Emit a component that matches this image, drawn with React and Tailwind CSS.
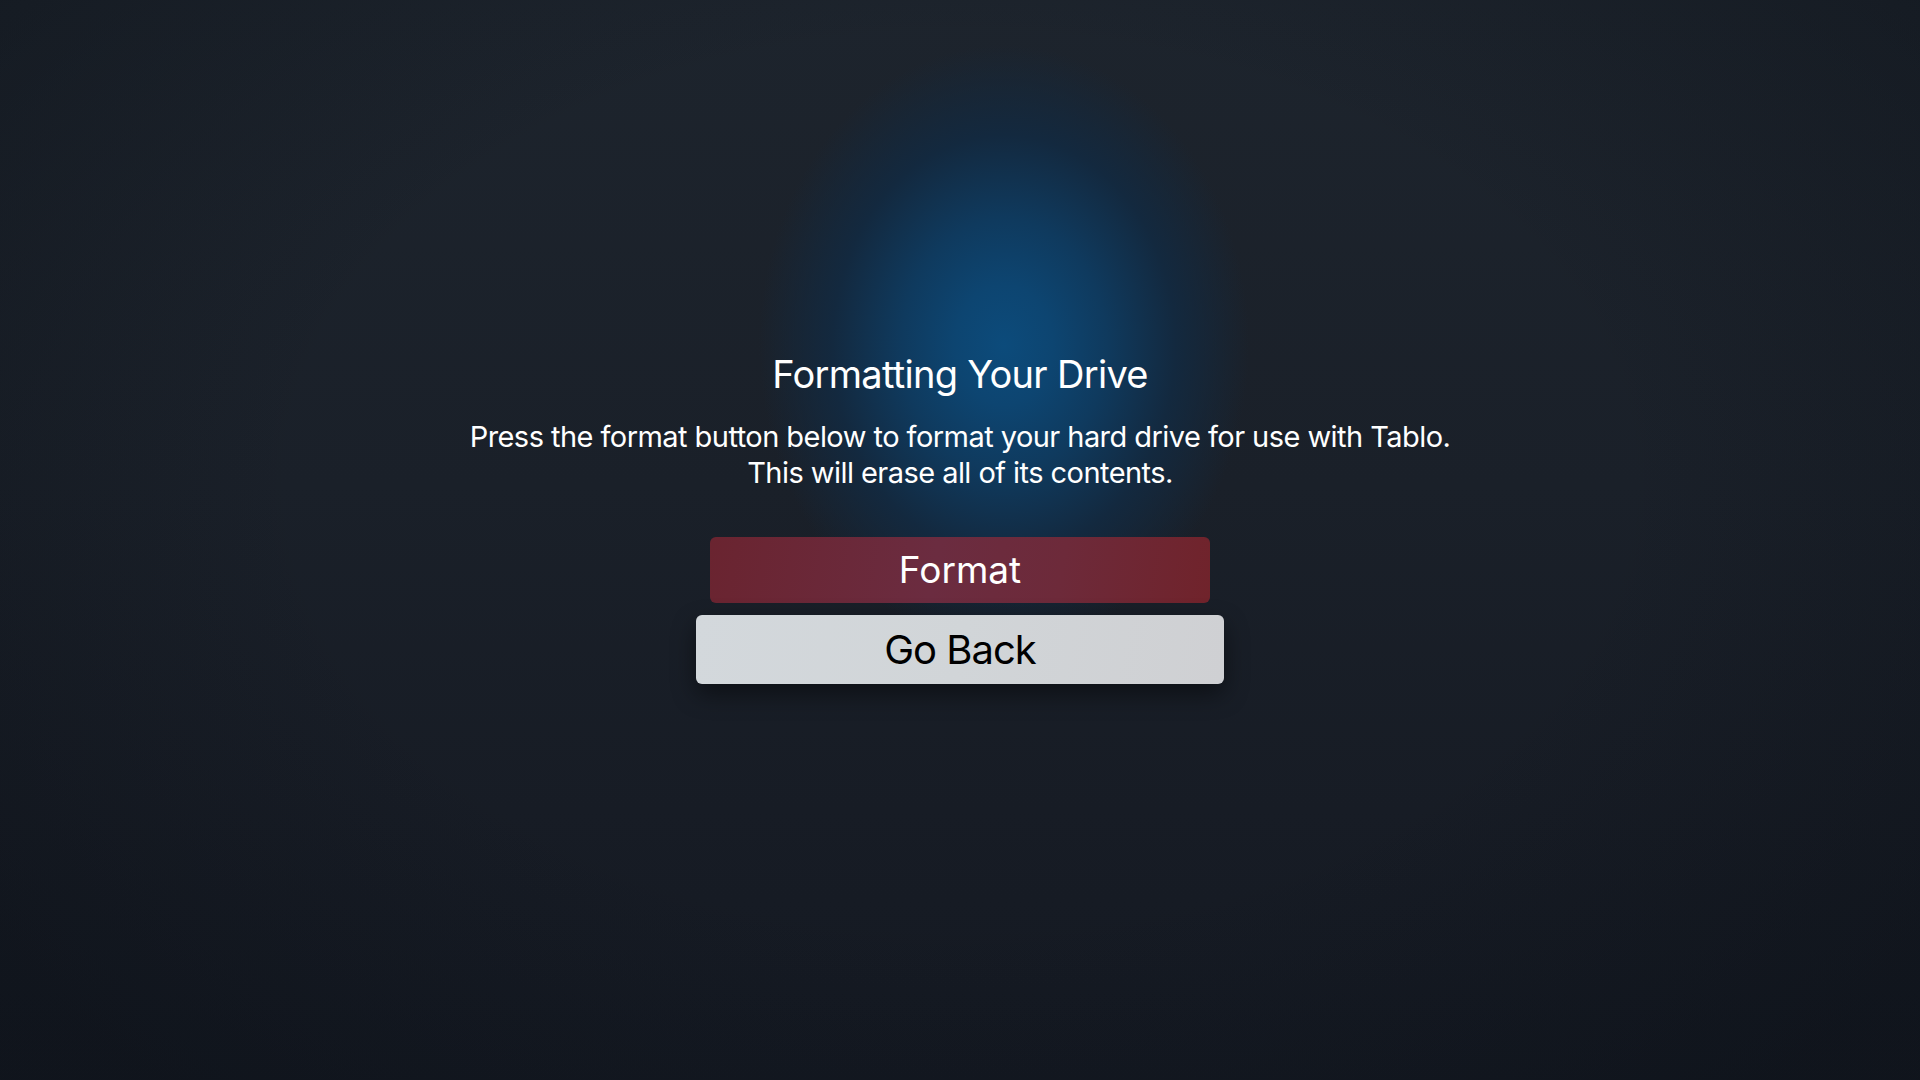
export default function App() {
  return (
    <div className="relative h-[1080px] w-[1920px] overflow-hidden bg-[linear-gradient(180deg,#1d242d_0%,#1a2029_45%,#171c25_75%,#141922_100%)] font-['Inter','Noto_Sans',sans-serif]">
      {/* blue spotlight behind the title */}
      <div className="pointer-events-none absolute inset-0 bg-[radial-gradient(ellipse_245px_300px_at_1004px_345px,#0c4b7b_0%,#0d4571_20%,#0f3a5e_42%,#13293f_70%,rgba(26,32,41,0)_100%)]" />
      <div className="pointer-events-none absolute inset-0 bg-[radial-gradient(ellipse_1200px_800px_at_960px_480px,rgba(0,0,0,0)_55%,rgba(8,12,18,0.35)_100%)]" />

      <div className="relative flex flex-col items-center pt-[351px] text-white">
        <h1 className="text-[38px] leading-[46px] font-normal tracking-[-0.7px]">Formatting Your Drive</h1>
        <p className="mt-[22px] text-center text-[29px] leading-[36px] tracking-[-0.55px]">
          Press the format button below to format your hard drive for use with Tablo.
          <br />
          This will erase all of its contents.
        </p>

        <button className="mt-[46px] flex h-[66px] w-[500px] items-center justify-center rounded-[6px] bg-[linear-gradient(100deg,#6a2430_0%,#6b2c40_45%,#6d2a3a_70%,#70232b_100%)] text-[37px] text-white">
          Format
        </button>
        <button className="mt-[12px] flex h-[69px] w-[528px] items-center justify-center rounded-[6px] bg-[linear-gradient(100deg,#d3d8dc_0%,#d1d5d8_50%,#cfd0d3_100%)] text-[40px] tracking-[-1px] text-black shadow-[0_10px_24px_rgba(0,0,0,0.45)]">
          Go Back
        </button>
      </div>
    </div>
  );
}
